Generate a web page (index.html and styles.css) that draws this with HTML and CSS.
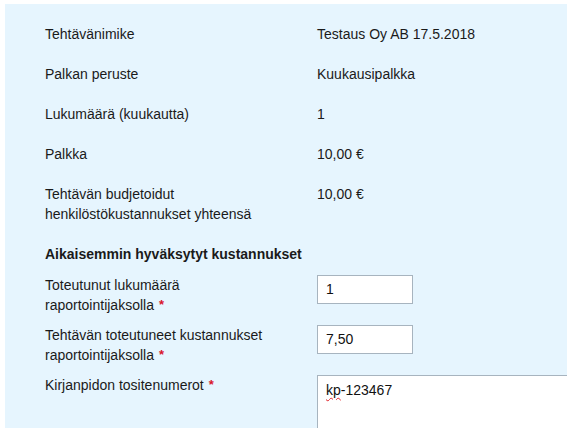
FILE: index.html
```html
<!DOCTYPE html>
<html lang="fi">
<head>
<meta charset="utf-8">
<title>Tehtävä</title>
<link rel="stylesheet" href="styles.css">
</head>
<body>
<div class="panel">
  <div class="row"><div class="label">Tehtävänimike</div><div class="value">Testaus Oy AB 17.5.2018</div></div>
  <div class="row"><div class="label">Palkan peruste</div><div class="value">Kuukausipalkka</div></div>
  <div class="row"><div class="label">Lukumäärä (kuukautta)</div><div class="value">1</div></div>
  <div class="row"><div class="label">Palkka</div><div class="value">10,00 €</div></div>
  <div class="row"><div class="label">Tehtävän budjetoidut henkilöstökustannukset yhteensä</div><div class="value">10,00 €</div></div>
  <div class="heading">Aikaisemmin hyväksytyt kustannukset</div>
  <div class="field"><div class="label">Toteutunut lukumäärä raportointijaksolla<span class="req">*</span></div><div class="input">1</div></div>
  <div class="field"><div class="label">Tehtävän toteutuneet kustannukset raportointijaksolla<span class="req">*</span></div><div class="input">7,50</div></div>
  <div class="field"><div class="label">Kirjanpidon tositenumerot<span class="req">*</span></div><div class="textarea"><span class="typo">kp</span>-123467</div></div>
</div>
</body>
</html>
```
FILE: styles.css
```css
html, body {
  margin: 0;
  padding: 0;
  background: #ffffff;
  overflow: hidden;
}
body {
  font-family: "Liberation Sans", Arial, sans-serif;
  font-size: 14px;
  line-height: 20px;
  color: #1a1a1a;
  padding: 4px 0 0 5px;
  width: 700px;
}
.panel {
  background: #e6f5fe;
  padding: 10px 0 40px 40px;
  min-height: 420px;
}
.row, .field {
  display: grid;
  grid-template-columns: 272px 1fr;
}
.row {
  padding: 10px 0;
}
.label {
  width: 240px;
}
.heading {
  font-weight: bold;
  padding: 10px 0 11px;
}
.field {
  align-items: start;
  margin-bottom: 10px;
}
.req {
  display: inline-block;
  margin-left: 5px;
  color: #d9132a;
  font-size: 13px;
  font-weight: bold;
  line-height: 12px;
  vertical-align: 1px;
}
.input {
  box-sizing: border-box;
  width: 96px;
  height: 29px;
  background: #fff;
  border: 1px solid #a7b4bf;
  padding: 4px 8px;
  line-height: 19px;
  color: #111;
}
.textarea {
  box-sizing: border-box;
  width: 320px;
  height: 70px;
  background: #fff;
  border: 1px solid #a7b4bf;
  padding: 5px 8px;
  line-height: 19px;
  color: #111;
}
.typo {
  text-decoration: underline wavy #e0242b;
  text-decoration-thickness: 1px;
  text-underline-offset: 2px;
}
```
